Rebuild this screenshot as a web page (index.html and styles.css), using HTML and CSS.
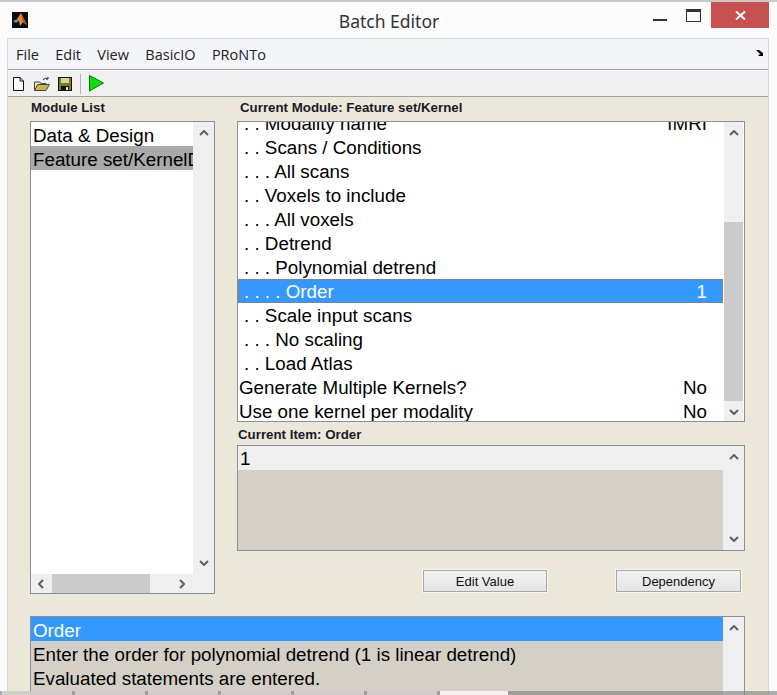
FILE: index.html
```html
<!DOCTYPE html>
<html lang="en">
<head>
  <meta charset="UTF-8">
  <title>Batch Editor</title>
  <link rel="stylesheet" href="styles.css">
</head>
<body>
  <div class="window">
    <div class="titlebar">
      <svg class="appIcon" width="16" height="16" viewBox="0 0 16 16">
        <rect width="16" height="16" fill="#0c0c0c"/>
        <path d="M1 9 L5 7 L7 9 L4 11 Z" fill="#2f9fd0"/>
        <path d="M5 7 L9 1 L15 13 L11 10 L8 14 L7 9 Z" fill="#e98a2a"/>
        <path d="M9 1 L15 13 L11 10 Z" fill="#c0501c"/>
      </svg>
      <div class="title">Batch Editor</div>
      <div class="winButtons">
        <svg class="winMin" width="14" height="2" viewBox="0 0 14 2"><rect width="14" height="2" fill="#333"/></svg>
        <svg class="winMax" width="15" height="13" viewBox="0 0 15 13"><rect x=".5" y=".5" width="14" height="12" fill="none" stroke="#333"/><rect width="15" height="3" fill="#333"/></svg>
        <div class="winClose">
          <svg width="11" height="9" viewBox="0 0 11 9"><path d="M1 .5 L10 8.5 M10 .5 L1 8.5" stroke="#fff" stroke-width="2" fill="none"/></svg>
        </div>
      </div>
    </div>

    <div class="client">
      <div class="menubar">
        <span>File</span><span>Edit</span><span>View</span><span>BasicIO</span><span>PRoNTo</span>
        <svg class="dock" width="7" height="6" viewBox="0 0 7 6"><path d="M0 0 H3 L7 3 V6 H2 L4 4 Z" fill="#000"/></svg>
      </div>
      <div class="toolbar">
        <svg width="11" height="14" viewBox="0 0 11 14"><path d="M.5 .5 H7 L10.5 4 V13.5 H.5 Z" fill="#fff" stroke="#111"/><path d="M7 .5 V4 H10.5" fill="none" stroke="#111"/></svg>
        <svg class="openIcon" width="16" height="14" viewBox="0 0 16 14"><path d="M.5 13.5 V5 H6 L7 6.5 H12 V8" fill="#f4ecb0" stroke="#444"/><path d="M.5 13.5 L3.5 7.5 H15.5 L12 13.5 Z" fill="#c8b64a" stroke="#444"/><path d="M9 3 Q11 0 14 2 M14 2 V0 M14 2 H12" fill="none" stroke="#333"/></svg>
        <svg class="saveIcon" width="14" height="14" viewBox="0 0 14 14"><rect x=".5" y=".5" width="13" height="13" fill="#7d7a1e" stroke="#111"/><rect x="3" y="1" width="8" height="5" fill="#d8d49c"/><rect x="3" y="9" width="8" height="4.500" fill="#111"/><rect x="8" y="10" width="2" height="3" fill="#ddd"/></svg>
        <div class="toolSep"></div>
        <svg width="15" height="17" viewBox="0 0 15 17"><path d="M.5 .5 L14.500 8 L.5 16 Z" fill="#0adf0a" stroke="#0a7a0a"/></svg>
      </div>

      <div class="panels">
        <div class="leftCol">
          <div class="label moduleLabel">Module List</div>
          <div class="box moduleBox">
            <div class="moduleInner">
              <div class="listArea">
                <div class="row">Data &amp; Design</div>
                <div class="row rowGrey">Feature set/KernelDefinition</div>
              </div>
              <div class="vscroll">
                <svg class="arrow" width="10" height="6" viewBox="0 0 10 6"><path d="M1 5 L5 1 L9 5" fill="none" stroke="#606060" stroke-width="2"/></svg>
                <svg class="arrow" width="10" height="6" viewBox="0 0 10 6"><path d="M1 1 L5 5 L9 1" fill="none" stroke="#606060" stroke-width="2"/></svg>
              </div>
            </div>
            <div class="hscroll">
              <svg width="6" height="10" viewBox="0 0 6 10"><path d="M5 1 L1 5 L5 9" fill="none" stroke="#606060" stroke-width="2"/></svg>
              <div class="hthumb"></div>
              <svg width="6" height="10" viewBox="0 0 6 10"><path d="M1 1 L5 5 L1 9" fill="none" stroke="#606060" stroke-width="2"/></svg>
            </div>
          </div>
        </div>

        <div class="rightCol">
          <div class="label moduleTitle">Current Module: Feature set/Kernel</div>
          <div class="box itemsBox">
            <div class="itemsList">
              <div class="row rowClipped"><span>. . Modality name</span><span class="val">fMRI</span></div>
              <div class="row">. . Scans / Conditions</div>
              <div class="row">. . . All scans</div>
              <div class="row">. . Voxels to include</div>
              <div class="row">. . . All voxels</div>
              <div class="row">. . Detrend</div>
              <div class="row">. . . Polynomial detrend</div>
              <div class="row rowSel"><span>. . . . Order</span><span class="val">1</span></div>
              <div class="row">. . Scale input scans</div>
              <div class="row">. . . No scaling</div>
              <div class="row">. . Load Atlas</div>
              <div class="row rowFlush"><span>Generate Multiple Kernels?</span><span class="val">No</span></div>
              <div class="row rowFlush"><span>Use one kernel per modality</span><span class="val">No</span></div>
            </div>
            <div class="vscroll vscrollThumb">
              <svg class="arrow" width="10" height="6" viewBox="0 0 10 6"><path d="M1 5 L5 1 L9 5" fill="none" stroke="#606060" stroke-width="2"/></svg>
              <div class="vthumb"></div>
              <svg class="arrow" width="10" height="6" viewBox="0 0 10 6"><path d="M1 1 L5 5 L9 1" fill="none" stroke="#606060" stroke-width="2"/></svg>
            </div>
          </div>

          <div class="label itemLabel">Current Item: Order</div>
          <div class="box valueBox">
            <div class="valueList">
              <div class="row rowLight">1</div>
            </div>
            <div class="vscroll">
              <svg class="arrow" width="10" height="6" viewBox="0 0 10 6"><path d="M1 5 L5 1 L9 5" fill="none" stroke="#606060" stroke-width="2"/></svg>
              <svg class="arrow" width="10" height="6" viewBox="0 0 10 6"><path d="M1 1 L5 5 L9 1" fill="none" stroke="#606060" stroke-width="2"/></svg>
            </div>
          </div>

          <div class="buttons">
            <button class="btn btnEdit">Edit Value</button>
            <button class="btn btnDep">Dependency</button>
          </div>
        </div>
      </div>

      <div class="box helpBox">
        <div class="helpList">
          <div class="row rowBlue">Order</div>
          <div class="row">Enter the order for polynomial detrend (1 is linear detrend)</div>
          <div class="row">Evaluated statements are entered.</div>
        </div>
        <div class="vscroll">
          <svg class="arrow" width="10" height="6" viewBox="0 0 10 6"><path d="M1 5 L5 1 L9 5" fill="none" stroke="#606060" stroke-width="2"/></svg>
        </div>
      </div>
    </div>

    <div class="taskbar">
      <div></div><div></div><div></div><div></div><div></div><div></div><div class="taskActive"></div>
    </div>
  </div>
</body>
</html>
```
FILE: styles.css
```css
html, body {
  margin: 0;
  padding: 0;
  height: 100%;
}
body {
  font-family: "Liberation Sans", Arial, sans-serif;
  background-color: #fbfbfb;
  overflow: hidden;
}
.window {
  position: relative;
  width: 777px;
  height: 695px;
  box-sizing: border-box;
  border-top: 2px solid #c9c9c9;
  overflow: hidden;
}
.titlebar {
  height: 36px;
  display: flex;
  align-items: center;
  padding-left: 12px;
}
.title {
  flex: 1;
  text-align: center;
  font-family: "Noto Sans", sans-serif;
  font-size: 17.5px;
  color: #333;
  padding-left: 97px;
  padding-top: 2px;
}
.winButtons {
  display: flex;
  align-items: flex-start;
  height: 36px;
  margin-right: 8px;
}
.winMin {
  margin: 17px 19px 0 0;
}
.winMax {
  margin: 7px 10px 0 0;
}
.winClose {
  width: 58px;
  height: 26px;
  background-color: #c75050;
  display: flex;
  align-items: center;
  justify-content: center;
}
.client {
  margin: 0 0 0 7px;
  width: 762px;
  height: 657px;
  border-left: 1px solid #d4d8dc;
  border-right: 1px solid #d4d8dc;
  border-top: 1px solid #d4d8dc;
  box-sizing: border-box;
  background-color: #ece8d9;
}
.menubar {
  height: 30px;
  background-color: #f4f5f9;
  border-bottom: 1px solid #a0a0a0;
  display: flex;
  align-items: center;
  font-family: "Open Sans", sans-serif;
  font-size: 14.5px;
  color: #222;
  padding-left: 8px;
  gap: 16.3px;
  position: relative;
}
.dock {
  position: absolute;
  right: 5px;
  top: 11px;
}
.toolbar {
  height: 25px;
  background-color: #f0f0f0;
  border-top: 1px solid #fff;
  border-bottom: 1px solid #a0a0a0;
  display: flex;
  align-items: center;
  padding-left: 5px;
}
.openIcon {
  margin-left: 10px;
}
.saveIcon {
  margin-left: 8px;
}
.toolSep {
  width: 1px;
  height: 20px;
  background-color: #b4b4b4;
  margin: 0 8px 0 8px;
}
.panels {
  display: flex;
  height: 519px;
}
.label {
  font-size: 13.3px;
  font-weight: bold;
  color: #1a1a2a;
  height: 16px;
  line-height: 16px;
  white-space: nowrap;
}
.leftCol {
  width: 207px;
  margin-left: 22px;
  padding-top: 3px;
}
.moduleLabel {
  margin-left: 1px;
  margin-bottom: 5px;
}
.rightCol {
  width: 508px;
  padding-top: 3px;
}
.moduleTitle {
  margin-left: 3px;
  margin-bottom: 5px;
}
.box {
  border: 1px solid #8a8e98;
  background-color: #fff;
  box-sizing: border-box;
  font-size: 18.8px;
  color: #000;
}
.moduleBox {
  width: 185px;
  height: 473px;
  display: flex;
  flex-direction: column;
}
.moduleInner {
  flex: 1;
  display: flex;
  min-height: 0;
}
.listArea {
  width: 162px;
  overflow: hidden;
}
.row {
  height: 24px;
  line-height: 28px;
  padding-left: 2px;
  white-space: nowrap;
  overflow: hidden;
}
.rowGrey {
  background-color: #a9a9a9;
}
.vscroll {
  flex: 1;
  background-color: #efefef;
  display: flex;
  flex-direction: column;
  justify-content: space-between;
  align-items: center;
  padding: 8px 0 8px;
}
.hscroll {
  height: 19px;
  background-color: #efefef;
  display: flex;
  align-items: center;
  padding-left: 7px;
}
.hthumb {
  width: 98px;
  height: 19px;
  background-color: #cbcbcb;
  margin: 0 29px 0 8px;
}
.itemsBox {
  width: 508px;
  height: 301px;
  display: flex;
}
.itemsList {
  width: 485px;
  overflow: hidden;
}
.itemsList .row {
  display: flex;
  justify-content: space-between;
  padding-left: 6px;
  padding-right: 16px;
  line-height: 26px;
}
.itemsList .rowFlush {
  padding-left: 1px;
  padding-right: 16px;
}
.itemsList .rowClipped {
  margin-top: -11px;
}
.itemsList .rowSel {
  background-color: #3399ff;
  color: #fff;
  outline: 1px dotted #d07010;
  outline-offset: -1px;
}
.vscrollThumb {
  position: relative;
  margin: 0 1px;
  padding-bottom: 6px;
}
.vthumb {
  position: absolute;
  left: 0;
  right: 0;
  top: 100px;
  height: 179px;
  background-color: #cbcbcb;
}
.itemLabel {
  margin-top: 5px;
  margin-left: 1px;
  margin-bottom: 2px;
}
.valueBox {
  width: 508px;
  height: 106px;
  display: flex;
}
.valueList {
  width: 485px;
  background-color: #d4d0c8;
}
.valueList .row {
  line-height: 26px;
}
.rowLight {
  background-color: #efefef;
}
.buttons {
  display: flex;
  margin-top: 18px;
}
.btn {
  width: 126px;
  height: 24px;
  font-family: "Liberation Sans", Arial, sans-serif;
  font-size: 13px;
  color: #111;
  border: 1px solid #f6f6f6;
  box-shadow: inset 0 0 0 1px #a8a8a8;
  background: linear-gradient(#f2f2f2, #e4e4e4);
  padding: 0;
}
.btnEdit {
  margin-left: 185px;
}
.btnDep {
  margin-left: 67px;
  width: 127px;
}
.helpBox {
  margin-left: 22px;
  width: 715px;
  height: 90px;
  display: flex;
  background-color: #d4d0c8;
}
.helpList {
  width: 692px;
}
.rowBlue {
  background-color: #3399ff;
  color: #fff;
}
.taskbar {
  position: absolute;
  left: 0;
  bottom: 0;
  width: 100%;
  height: 4px;
  display: flex;
  gap: 3px;
  padding-left: 2px;
  background-color: rgba(130, 130, 130, 0.65);
}
.taskbar div {
  width: 70px;
  background-color: rgba(225, 225, 225, 0.7);
}
.taskbar .taskActive {
  width: 68px;
  background-color: #f2f2f2;
}
```
